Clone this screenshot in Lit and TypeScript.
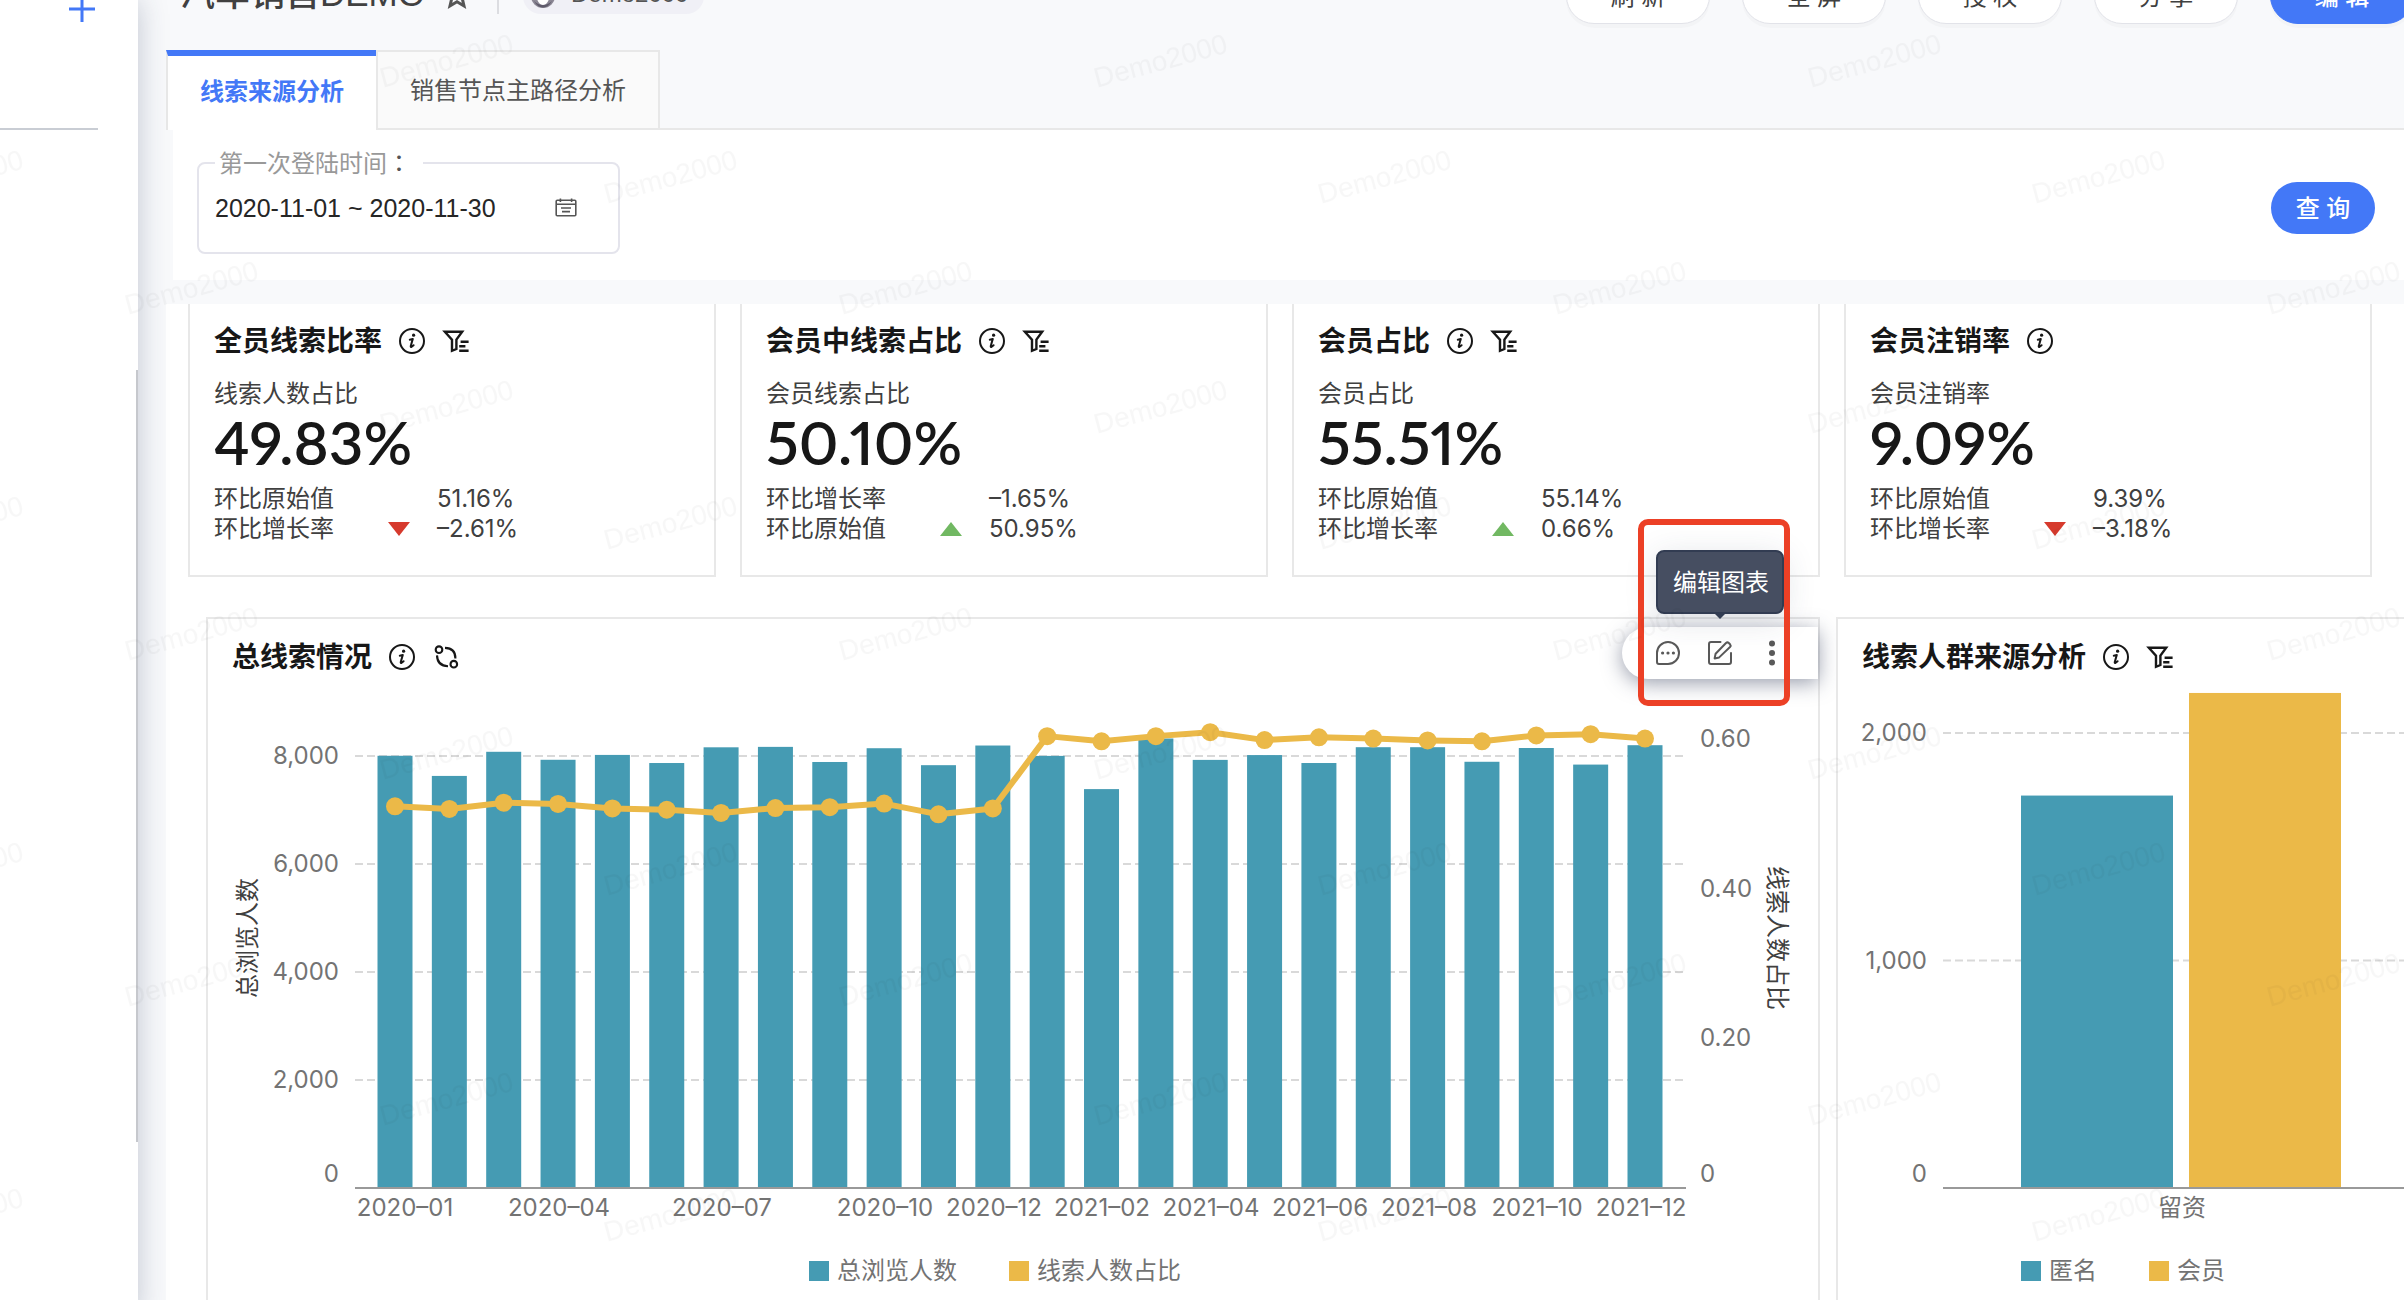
import { LitElement, html, svg, css, nothing } from "lit";
import { customElement, property } from "lit/decorators.js";

const infoIcon = html`<svg class="icon" viewBox="0 0 28 28" aria-hidden="true">
  <circle cx="14" cy="14" r="12" fill="none" stroke="currentColor" stroke-width="2" />
  <circle cx="15.6" cy="8.2" r="1.6" fill="currentColor" />
  <path d="M11.8 12.8 L14.8 11.9 L12.7 19.2 Q12.6 20.3 13.6 19.8 L15.6 18.2" fill="none" stroke="currentColor" stroke-width="2" stroke-linecap="round" stroke-linejoin="round" />
</svg>`;

const filterIcon = html`<svg class="icon" viewBox="0 0 28 28" aria-hidden="true">
  <path d="M2.8 4.7 H20.2 L14.4 12.6 V22 L10 23.8 V12.8 Z" fill="none" stroke="currentColor" stroke-width="2.4" />
  <path d="M18.6 14.8 H26.6 M17.2 19.2 H23.4 M17.2 23.8 H26.6" fill="none" stroke="currentColor" stroke-width="2.4" />
</svg>`;

const linkIcon = html`<svg class="icon" viewBox="0 0 28 28" aria-hidden="true">
  <g fill="none" stroke="currentColor" stroke-width="2.1">
    <circle cx="7" cy="6.7" r="3.3" />
    <circle cx="21.8" cy="21.2" r="3.3" />
    <path d="M13 4.9 C20 5 23.4 9 23.4 15.4" />
    <path d="M5 12.4 C5.2 19 8.6 23 16 23.2" />
  </g>
</svg>`;

type TitleIcon = "info" | "filter" | "link";
const titleIcons = { info: infoIcon, filter: filterIcon, link: linkIcon };
const iconLabels = { info: "说明", filter: "筛选", link: "联动" };

const headingStyles = css`
  .heading {
    display: flex;
    align-items: center;
    gap: 16px;
  }
  h2 {
    margin: 0;
    font-size: 28px;
    line-height: 40px;
    font-weight: 600;
    color: #171717;
  }
  .icon-button {
    display: flex;
    padding: 0;
    border: 0;
    background: none;
    color: #171717;
  }
  .icon {
    width: 28px;
    height: 28px;
  }
`;

const heading = (title: string, icons: TitleIcon[]) => html`<div class="heading">
  <h2>${title}</h2>
  ${icons.map(
    (name) => html`<button class="icon-button" aria-label=${iconLabels[name]}>${titleIcons[name]}</button>`
  )}
</div>`;

interface Metric {
  title: string;
  icons: TitleIcon[];
  label: string;
  value: string;
  rows: { name: string; trend?: "up" | "down"; value: string }[];
}

const metrics: Metric[] = [
  {
    title: "全员线索比率",
    icons: ["info", "filter"],
    label: "线索人数占比",
    value: "49.83%",
    rows: [
      { name: "环比原始值", value: "51.16%" },
      { name: "环比增长率", trend: "down", value: "–2.61%" },
    ],
  },
  {
    title: "会员中线索占比",
    icons: ["info", "filter"],
    label: "会员线索占比",
    value: "50.10%",
    rows: [
      { name: "环比增长率", value: "–1.65%" },
      { name: "环比原始值", trend: "up", value: "50.95%" },
    ],
  },
  {
    title: "会员占比",
    icons: ["info", "filter"],
    label: "会员占比",
    value: "55.51%",
    rows: [
      { name: "环比原始值", value: "55.14%" },
      { name: "环比增长率", trend: "up", value: "0.66%" },
    ],
  },
  {
    title: "会员注销率",
    icons: ["info"],
    label: "会员注销率",
    value: "9.09%",
    rows: [
      { name: "环比原始值", value: "9.39%" },
      { name: "环比增长率", trend: "down", value: "–3.18%" },
    ],
  },
];

@customElement("metric-card")
export class MetricCard extends LitElement {
  @property({ attribute: false }) metric!: Metric;

  static styles = [
    headingStyles,
    css`
      :host {
        display: block;
        box-sizing: border-box;
        padding: 17px 24px 31px;
        border: 2px solid #e8e8e8;
        border-top: 0;
        background: #fff;
        color: #404040;
        font-size: 24px;
      }
      .label {
        margin: 16px 0 0;
        line-height: 34px;
      }
      .value {
        margin: 0;
        font-family: Lato, "Noto Sans CJK SC", sans-serif;
        font-size: 60px;
        line-height: 62px;
        font-weight: 600;
        font-variant-numeric: proportional-nums;
        color: #171717;
      }
      .rows {
        margin: 11px 0 0;
        display: grid;
        grid-template-columns: 152px 71px 1fr;
        line-height: 30px;
      }
      .rows dt,
      .rows dd {
        margin: 0;
      }
      .trend {
        display: flex;
        align-items: center;
        padding-left: 22px;
      }
      .trend svg {
        width: 22px;
        height: 14px;
      }
      .up {
        fill: #71b862;
      }
      .down {
        fill: #d63a2d;
      }
    `,
  ];

  render() {
    const m = this.metric;
    return html`${heading(m.title, m.icons)}
      <p class="label">${m.label}</p>
      <p class="value">${m.value}</p>
      <dl class="rows">
        ${m.rows.map(
          (r) => html`<dt>${r.name}</dt>
            <dd class="trend">
              ${r.trend
                ? html`<svg viewBox="0 0 22 14" aria-hidden="true">
                    <path class=${r.trend} d=${r.trend === "up" ? "M0 14 L11 0 L22 14 Z" : "M0 0 H22 L11 14 Z"} />
                  </svg>`
                : nothing}
            </dd>
            <dd>${r.value}</dd>`
        )}
      </dl>`;
  }
}

const chartStyles = css`
  :host {
    display: block;
    box-sizing: border-box;
    position: relative;
    border: 2px solid #e8e8e8;
    border-bottom: 0;
    background: #fff;
  }
  .heading {
    padding: 18px 24px 0;
  }
  .chart {
    display: block;
    width: 100%;
  }
  .chart text {
    font-size: 24px;
    fill: #737373;
  }
  .chart .axis-title {
    fill: #404040;
  }
  .grid {
    stroke: #d9d9d9;
    stroke-width: 2;
    stroke-dasharray: 8 4;
  }
  .axis {
    stroke: #999;
    stroke-width: 2;
  }
  .teal {
    fill: #459bb3;
  }
  .gold {
    fill: #ebb948;
  }
  .line {
    fill: none;
    stroke: #ebb948;
    stroke-width: 6;
    stroke-linejoin: round;
  }
`;

const BASE = 511;

@customElement("trend-chart")
export class TrendChart extends LitElement {
  private views = [
    8004, 7631, 8078, 7930, 8020, 7870, 8161, 8169, 7889, 8144, 7830, 8194, 8002, 7387, 8324, 7928, 8017, 7870, 8163,
    8163, 7893, 8148, 7841, 8200,
  ];
  private ratios = [
    0.5096, 0.5061, 0.5144, 0.5127, 0.5067, 0.505, 0.5007, 0.5073, 0.5085, 0.5132, 0.4989, 0.5067, 0.6033, 0.5964,
    0.6033, 0.6085, 0.598, 0.6017, 0.6001, 0.5975, 0.5964, 0.6043, 0.6059, 0.6001,
  ];
  private months: [string, number][] = [
    ["2020–01", 197],
    ["2020–04", 351],
    ["2020–07", 514],
    ["2020–10", 677],
    ["2020–12", 786],
    ["2021–02", 894],
    ["2021–04", 1003],
    ["2021–06", 1112],
    ["2021–08", 1221],
    ["2021–10", 1329],
    ["2021–12", 1433],
  ];

  static styles = [
    headingStyles,
    chartStyles,
    css`
      .toolbar {
        position: absolute;
        top: 8px;
        right: 0;
        box-sizing: border-box;
        width: 196px;
        height: 52px;
        padding-left: 32px;
        display: flex;
        align-items: center;
        gap: 24px;
        border-radius: 26px 0 0 26px;
        background: #fff;
        box-shadow: 0 4px 20px rgba(50, 60, 90, 0.5);
      }
      .tool {
        display: flex;
        padding: 0;
        border: 0;
        background: none;
        color: #595959;
      }
      .tool svg {
        width: 28px;
        height: 28px;
      }
      .tooltip {
        position: absolute;
        left: 34px;
        bottom: 65px;
        box-sizing: border-box;
        width: 128px;
        padding: 13px 0 11px 2px;
        border: 2px solid #323c52;
        border-radius: 8px;
        background: #464e61;
        color: #fff;
        font-size: 24px;
        line-height: 36px;
        text-align: center;
        box-shadow: 0 6px 32px rgba(50, 60, 90, 0.15);
      }
      .tooltip::after {
        content: "";
        position: absolute;
        top: 100%;
        left: 55px;
        border: 7px solid transparent;
        border-top-color: #323c52;
        border-bottom: 0;
      }
      .highlight {
        position: absolute;
        left: 16px;
        top: -108px;
        box-sizing: border-box;
        width: 152px;
        height: 187px;
        border: 6px solid #ec4026;
        border-radius: 10px;
        pointer-events: none;
      }
    `,
  ];

  render() {
    const x = (i: number) => 187 + (i * 1250) / 23;
    const yBar = (v: number) => BASE - v * 0.054;
    const yLine = (v: number) => BASE - v * 749;
    return html`${heading("总线索情况", ["info", "link"])}
      <svg class="chart" viewBox="0 0 1610 640" role="img" aria-label="总浏览人数与线索人数占比">
        ${[2000, 4000, 6000, 8000].map(
          (v) => svg`<line class="grid" x1="147" x2="1478" y1=${yBar(v)} y2=${yBar(v)} />
            <text x="131" y=${yBar(v) + 8} text-anchor="end">${v.toLocaleString("en-US")}</text>`
        )}
        <text x="131" y="505" text-anchor="end">0</text>
        ${this.views.map(
          (v, i) => svg`<rect class="teal" x=${x(i) - 17.5} y=${yBar(v)} width="35" height=${v * 0.054} />`
        )}
        <line class="axis" x1="147" x2="1478" y1=${BASE} y2=${BASE} />
        <polyline class="line" points=${this.ratios.map((v, i) => `${x(i)},${yLine(v)}`).join(" ")} />
        ${this.ratios.map((v, i) => svg`<circle class="gold" cx=${x(i)} cy=${yLine(v)} r="9" />`)}
        <text x="1492" y="70">0.60</text>
        <text x="1492" y="220">0.40</text>
        <text x="1492" y="369">0.20</text>
        <text x="1492" y="505">0</text>
        ${this.months.map(([m, c]) => svg`<text x=${c} y="539" text-anchor="middle">${m}</text>`)}
        <text class="axis-title" text-anchor="middle" transform="translate(48 261) rotate(-90)">总浏览人数</text>
        <text class="axis-title" text-anchor="middle" transform="translate(1561 261) rotate(90)">线索人数占比</text>
        <rect class="teal" x="601" y="584" width="20" height="20" />
        <text x="629" y="602">总浏览人数</text>
        <rect class="gold" x="801" y="584" width="20" height="20" />
        <text x="829" y="602">线索人数占比</text>
      </svg>
      <div class="toolbar">
        <button class="tool" aria-label="评论">
          <svg viewBox="0 0 28 28" aria-hidden="true">
            <path d="M3 14 A11 11 0 1 1 14 25 H5 Q3 25 3 23 Z" fill="none" stroke="currentColor" stroke-width="2" />
            <g fill="currentColor">
              <circle cx="8.6" cy="14" r="1.6" />
              <circle cx="14" cy="14" r="1.6" />
              <circle cx="19.4" cy="14" r="1.6" />
            </g>
          </svg>
        </button>
        <button class="tool" aria-label="编辑图表">
          <svg viewBox="0 0 28 28" aria-hidden="true">
            <g fill="none" stroke="currentColor" stroke-width="2" stroke-linejoin="round">
              <path d="M14.5 3 H5 Q3 3 3 5 V23 Q3 25 5 25 H23 Q25 25 25 23 V14" stroke-linecap="round" />
              <path d="M8.6 19.4 L9.6 14.8 L20 4 Q21.4 2.8 22.8 4 L24 5.2 Q25.2 6.6 24 8 L13.2 18.4 Z" />
            </g>
          </svg>
        </button>
        <button class="tool" aria-label="更多">
          <svg viewBox="0 0 28 28" aria-hidden="true">
            <g fill="currentColor">
              <circle cx="14" cy="4.6" r="3" />
              <circle cx="14" cy="14" r="3" />
              <circle cx="14" cy="23.4" r="3" />
            </g>
          </svg>
        </button>
        <div class="tooltip" role="tooltip">编辑图表</div>
        <div class="highlight"></div>
      </div>`;
  }
}

@customElement("source-chart")
export class SourceChart extends LitElement {
  static styles = [
    headingStyles,
    chartStyles,
    css`
      :host {
        border-right: 0;
      }
    `,
  ];

  render() {
    const y = (v: number) => BASE - v * 0.2275;
    return html`${heading("线索人群来源分析", ["info", "filter"])}
      <svg class="chart" viewBox="0 0 566 640" role="img" aria-label="线索人群来源分析">
        ${[1000, 2000].map(
          (v) => svg`<line class="grid" x1="105" x2="566" y1=${y(v)} y2=${y(v)} />
            <text x="89" y=${y(v) + 8} text-anchor="end">${v.toLocaleString("en-US")}</text>`
        )}
        <text x="89" y="505" text-anchor="end">0</text>
        <rect class="teal" x="183" y=${y(1725)} width="152" height=${BASE - y(1725)} />
        <rect class="gold" x="351" y=${y(2176)} width="152" height=${BASE - y(2176)} />
        <line class="axis" x1="105" x2="566" y1=${BASE} y2=${BASE} />
        <text x="344" y="539" text-anchor="middle">留资</text>
        <rect class="teal" x="183" y="584" width="20" height="20" />
        <text x="211" y="602">匿名</text>
        <rect class="gold" x="311" y="584" width="20" height="20" />
        <text x="339" y="602">会员</text>
      </svg>`;
  }
}

@customElement("app-root")
export class AppRoot extends LitElement {
  static styles = css`
    :host {
      display: grid;
      grid-template-columns: 138px minmax(0, 1fr);
      position: relative;
      height: 100vh;
      overflow: hidden;
      background: #f8f9fb;
      color: #404040;
      font-family: Inter, "Noto Sans CJK SC", sans-serif;
      font-size: 24px;
    }
    button,
    input {
      font: inherit;
    }
    .sidebar {
      position: relative;
      z-index: 1;
      background: #fff;
      box-shadow: 0 0 28px rgba(40, 55, 90, 0.26);
    }
    .sidebar-top {
      box-sizing: border-box;
      height: 130px;
      margin-right: 40px;
      border-bottom: 2px solid #c9cdd4;
      display: flex;
      justify-content: flex-end;
      align-items: flex-start;
    }
    .add {
      display: flex;
      margin: -4px 3px 0 0;
      padding: 0;
      border: 0;
      background: none;
      color: #4378f7;
    }
    .add svg {
      width: 26px;
      height: 26px;
    }
    .scrollbar {
      position: absolute;
      right: 0;
      top: 370px;
      width: 2px;
      height: 772px;
      background: #c6c8cd;
    }
    main {
      display: flex;
      flex-direction: column;
      margin-top: -32px;
      padding-left: 28px;
    }
    header {
      display: flex;
      align-items: center;
      height: 56px;
      padding-left: 14px;
      color: #555;
    }
    h1 {
      margin: 0;
      padding-bottom: 4px;
      font-family: "Liberation Sans", "Noto Sans CJK SC", sans-serif;
      font-size: 35px;
      line-height: 48px;
      font-weight: 500;
      color: #404040;
    }
    .star {
      display: flex;
      margin-left: 18px;
      padding: 0;
      border: 0;
      background: none;
      color: #555;
    }
    .star svg {
      width: 28px;
      height: 28px;
    }
    .rule {
      width: 2px;
      height: 36px;
      margin: 0 24px 0 26px;
      background: #dcdde1;
    }
    .user {
      display: flex;
      align-items: center;
      gap: 16px;
      height: 36px;
      padding: 0 16px 0 8px;
      border-radius: 18px;
      background: #f0f0f6;
      font-family: "Liberation Sans", sans-serif;
      line-height: 32px;
    }
    .user span {
      padding-bottom: 4px;
    }
    .user svg {
      width: 24px;
      height: 24px;
    }
    .actions {
      display: flex;
      gap: 32px;
      margin: 0 -10px 0 auto;
    }
    .action {
      box-sizing: border-box;
      width: 144px;
      height: 56px;
      padding: 0 0 4px;
      border: 1px solid #e2e3e9;
      border-radius: 28px;
      background: #fff;
      color: #404040;
      box-shadow: 0 4px 0 rgba(0, 0, 0, 0.02);
    }
    .primary {
      border-color: #4378f7;
      background: #4378f7;
      color: #fff;
      font-weight: 500;
    }
    nav {
      display: flex;
      margin-top: 26px;
      border-bottom: 2px solid #e8e8e8;
      height: 78px;
    }
    .tab {
      box-sizing: border-box;
      height: 80px;
      padding: 0 32px 4px;
      border: 2px solid #e8e8e8;
      background: #fafafa;
      color: #555;
    }
    .tab.active {
      padding: 0 32px 8px;
      border-width: 6px 0 0 2px;
      border-top-color: #4378f7;
      background: #fff;
      color: #4378f7;
      font-weight: 600;
      width: 210px;
    }
    .filters {
      display: flex;
      justify-content: space-between;
      align-items: flex-start;
      box-sizing: border-box;
      height: 150px;
      margin-left: 7px;
      padding: 20px 29px 0 24px;
      background: #fff;
    }
    fieldset {
      box-sizing: border-box;
      width: 423px;
      height: 104px;
      margin: 0;
      padding: 12px 40px 0 16px;
      border: 2px solid #e4e4ec;
      border-radius: 8px;
    }
    legend {
      padding: 0 12px 0 4px;
      line-height: 24px;
      color: #999;
    }
    .colon {
      color: #555;
      font-family: "Noto Sans CJK TC", sans-serif;
    }
    .date {
      display: flex;
      align-items: center;
      justify-content: space-between;
    }
    .date input {
      flex: 1;
      min-width: 0;
      height: 40px;
      padding: 0;
      border: 0;
      outline: 0;
      background: none;
      font-family: "Liberation Sans", sans-serif;
      font-size: 25px;
      color: #262626;
    }
    .calendar {
      display: flex;
      padding: 0;
      border: 0;
      background: none;
      color: #555;
    }
    .calendar svg {
      width: 24px;
      height: 24px;
    }
    .query {
      width: 104px;
      height: 52px;
      margin-top: 32px;
      padding: 0 0 4px;
      border: 0;
      border-radius: 26px;
    }
    .board {
      flex: 1;
      margin-top: 24px;
      background: #fff;
    }
    .metrics {
      display: grid;
      grid-template-columns: repeat(4, minmax(0, 1fr));
      gap: 24px;
      padding: 0 32px 0 22px;
    }
    .charts {
      display: grid;
      grid-template-columns: minmax(0, 1614fr) minmax(0, 568fr);
      gap: 16px;
      margin-top: 40px;
      padding-left: 40px;
    }
    .watermark {
      position: absolute;
      inset: 0;
      z-index: 2;
      width: 100%;
      height: 100%;
      pointer-events: none;
    }
    .watermark text {
      font-family: "Liberation Sans", sans-serif;
      font-size: 28px;
      fill: #000;
      fill-opacity: 0.032;
    }
  `;

  render() {
    return html`
      <aside class="sidebar">
        <div class="sidebar-top">
          <button class="add" aria-label="新增">
            <svg viewBox="0 0 26 26" aria-hidden="true">
              <path d="M0 13 H26 M13 0 V26" stroke="currentColor" stroke-width="3" />
            </svg>
          </button>
        </div>
        <div class="scrollbar"></div>
      </aside>
      <main>
        <header>
          <h1>汽车销售DEMO</h1>
          <button class="star" aria-label="收藏">
            <svg viewBox="0 0 28 28" aria-hidden="true">
              <path
                d="M14 3 L17.2 10.2 L25 11 L19.2 16.2 L21 24 L14 19.8 L7 24 L8.8 16.2 L3 11 L10.8 10.2 Z"
                fill="none"
                stroke="currentColor"
                stroke-width="3"
              />
            </svg>
          </button>
          <div class="rule"></div>
          <div class="user">
            <svg viewBox="0 0 24 24" aria-hidden="true">
              <circle cx="12" cy="12" r="12" fill="#8b8794" />
              <circle cx="12" cy="10" r="7" fill="#c9c6d0" />
              <path d="M6 15 Q12 12 18 15 Q16 21 12 21 Q8 21 6 15 Z" fill="#fff" />
              <path d="M3 17 Q7 24 12 23.5 Q17 24 21 17 Q17 21 12 21 Q7 21 3 17 Z" fill="#5f5b6b" />
            </svg>
            <span>Demo2000</span>
          </div>
          <div class="actions">
            ${["刷 新", "全 屏", "授 权", "分 享"].map((t) => html`<button class="action">${t}</button>`)}
            <button class="action primary">编 辑</button>
          </div>
        </header>
        <nav>
          <button class="tab active">线索来源分析</button>
          <button class="tab">销售节点主路径分析</button>
        </nav>
        <section class="filters">
          <fieldset>
            <legend><label for="first-login">第一次登陆时间<span class="colon">：</span></label></legend>
            <div class="date">
              <input id="first-login" type="text" value="2020-11-01 ~ 2020-11-30" readonly />
              <button class="calendar" aria-label="选择日期">
                <svg viewBox="0 0 24 24" aria-hidden="true">
                  <g fill="none" stroke="currentColor" stroke-width="1.6">
                    <rect x="2.2" y="4.2" width="19.6" height="15.6" rx="1" />
                    <path d="M2 8.2 H22 M6.4 2.6 V6 M17.6 2.6 V6 M7 12 H17 M8 15.6 H16" />
                  </g>
                </svg>
              </button>
            </div>
          </fieldset>
          <button class="query primary">查 询</button>
        </section>
        <section class="board">
          <div class="metrics">${metrics.map((m) => html`<metric-card .metric=${m}></metric-card>`)}</div>
          <div class="charts">
            <trend-chart></trend-chart>
            <source-chart></source-chart>
          </div>
        </section>
      </main>
      <svg class="watermark" aria-hidden="true">
        <defs>
          <pattern id="mark" x="58" y="-10" width="714" height="346" patternUnits="userSpaceOnUse">
            <text text-anchor="middle" transform="translate(391 80) rotate(-15)">Demo2000</text>
            <text text-anchor="middle" transform="translate(615 196) rotate(-15)">Demo2000</text>
            <text text-anchor="middle" transform="translate(136 307) rotate(-15)">Demo2000</text>
          </pattern>
        </defs>
        <rect width="100%" height="100%" fill="url(#mark)" />
      </svg>
    `;
  }
}
